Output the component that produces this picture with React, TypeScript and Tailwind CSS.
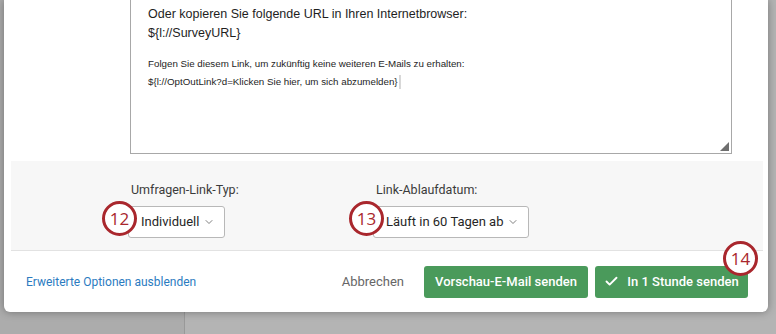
import { Check, ChevronDown } from 'lucide-react';

const ui = { fontFamily: 'Roboto, "Open Sans", sans-serif' };
const helv = { fontFamily: '"Liberation Sans", Arial, sans-serif' };

const Marker = ({ n }: { n: number }) => (
  <div
    className="absolute flex h-[35px] w-[35px] items-center justify-center rounded-full border-[3px] border-[#a9272d] bg-white pb-[1px] text-[17px] leading-none text-[#a9272d]"
    style={{ fontFamily: '"Open Sans", sans-serif' }}
  >
    {n}
  </div>
);

const Select = ({ label, value, width }: { label: string; value: string; width: string }) => (
  <div className="flex flex-col items-start">
    <div className="pl-[3px] text-[12.5px] text-[#3b3b3b]">{label}</div>
    <div className={`mt-[6px] flex h-[32px] items-center justify-between whitespace-nowrap rounded-[3px] border border-[#b8b8b8] bg-white pl-[12px] pr-[9px] text-[13px] text-[#262626] ${width}`}>
      <span>{value}</span>
      <ChevronDown size={12} strokeWidth={1.5} className="text-[#555]" />
    </div>
  </div>
);

export default function App() {
  return (
    <div className="relative h-[334px] w-[776px] overflow-hidden bg-[#b3b3b3]">
      <div className="flex h-full">
        <div className="w-[185px] border-r border-[#999] bg-[#acacac]" />
        <div className="flex-1 bg-[#b4b4b4]" />
      </div>

      <div
        className="absolute left-[4px] top-0 h-[312px] w-[764px] rounded-b-[6px] bg-white shadow-[0_0_8px_rgba(0,0,0,0.35)]"
        style={ui}
      >
        {/* message editor */}
        <div className="relative ml-[126px] h-[154px] w-[602px] border-x border-b border-[#a8a8a8] pl-[17px] text-[#1e1e1e]" style={helv}>
          <p className="pt-[5px] text-[12.5px] leading-[19px]">Oder kopieren Sie folgende URL in Ihren Internetbrowser:</p>
          <p className="text-[12.5px] leading-[19px]">{'${l://SurveyURL}'}</p>
          <p className="mt-[12px] text-[9.75px] leading-[18px]">Folgen Sie diesem Link, um zukünftig keine weiteren E-Mails zu erhalten:</p>
          <p className="flex items-center text-[9.75px] leading-[18px]">
            {'${l://OptOutLink?d=Klicken Sie hier, um sich abzumelden}'}
            <span className="ml-[1px] inline-block h-[14px] w-[2px] bg-[#d8d8d8]" />
          </p>
          <svg className="absolute bottom-[2px] right-[2px]" width="9" height="9" viewBox="0 0 9 9">
            <path d="M9 0 L9 9 L0 9 Z" fill="#6f6f6f" />
          </svg>
        </div>

        {/* link options */}
        <div className="relative ml-[7px] mt-[7px] grid h-[90px] w-[752px] grid-cols-[245px_auto] border-b border-[#e2e2e2] bg-[#f7f7f7] pl-[117px] pt-[20px]">
          <Select label="Umfragen-Link-Typ:" value="Individuell" width="w-[97px]" />
          <Select label="Link-Ablaufdatum:" value="Läuft in 60 Tagen ab" width="w-[156px]" />
          <div className="absolute left-[91px] top-[40px]"><Marker n={12} /></div>
          <div className="absolute left-[338px] top-[40px]"><Marker n={13} /></div>
        </div>

        {/* footer */}
        <div className="relative flex h-[61px] items-center pl-[22px] pr-[20px]">
          <span className="text-[12px] text-[#2b7bbf]">Erweiterte Optionen ausblenden</span>
          <span className="ml-auto mr-[20px] text-[13px] text-[#666]">Abbrechen</span>
          <button className="h-[32px] w-[164px] rounded-[3px] bg-[#4a9a5b] text-[13px] font-medium text-white">
            Vorschau-E-Mail senden
          </button>
          <button className="ml-[7px] flex h-[32px] w-[153px] items-center justify-center gap-[8px] rounded-[3px] bg-[#4a9a5b] text-[13px] font-medium text-white">
            <Check size={15} strokeWidth={3} />
            In 1 Stunde senden
          </button>
          <div className="absolute left-[719px] top-[-10px]"><Marker n={14} /></div>
        </div>
      </div>
    </div>
  );
}
